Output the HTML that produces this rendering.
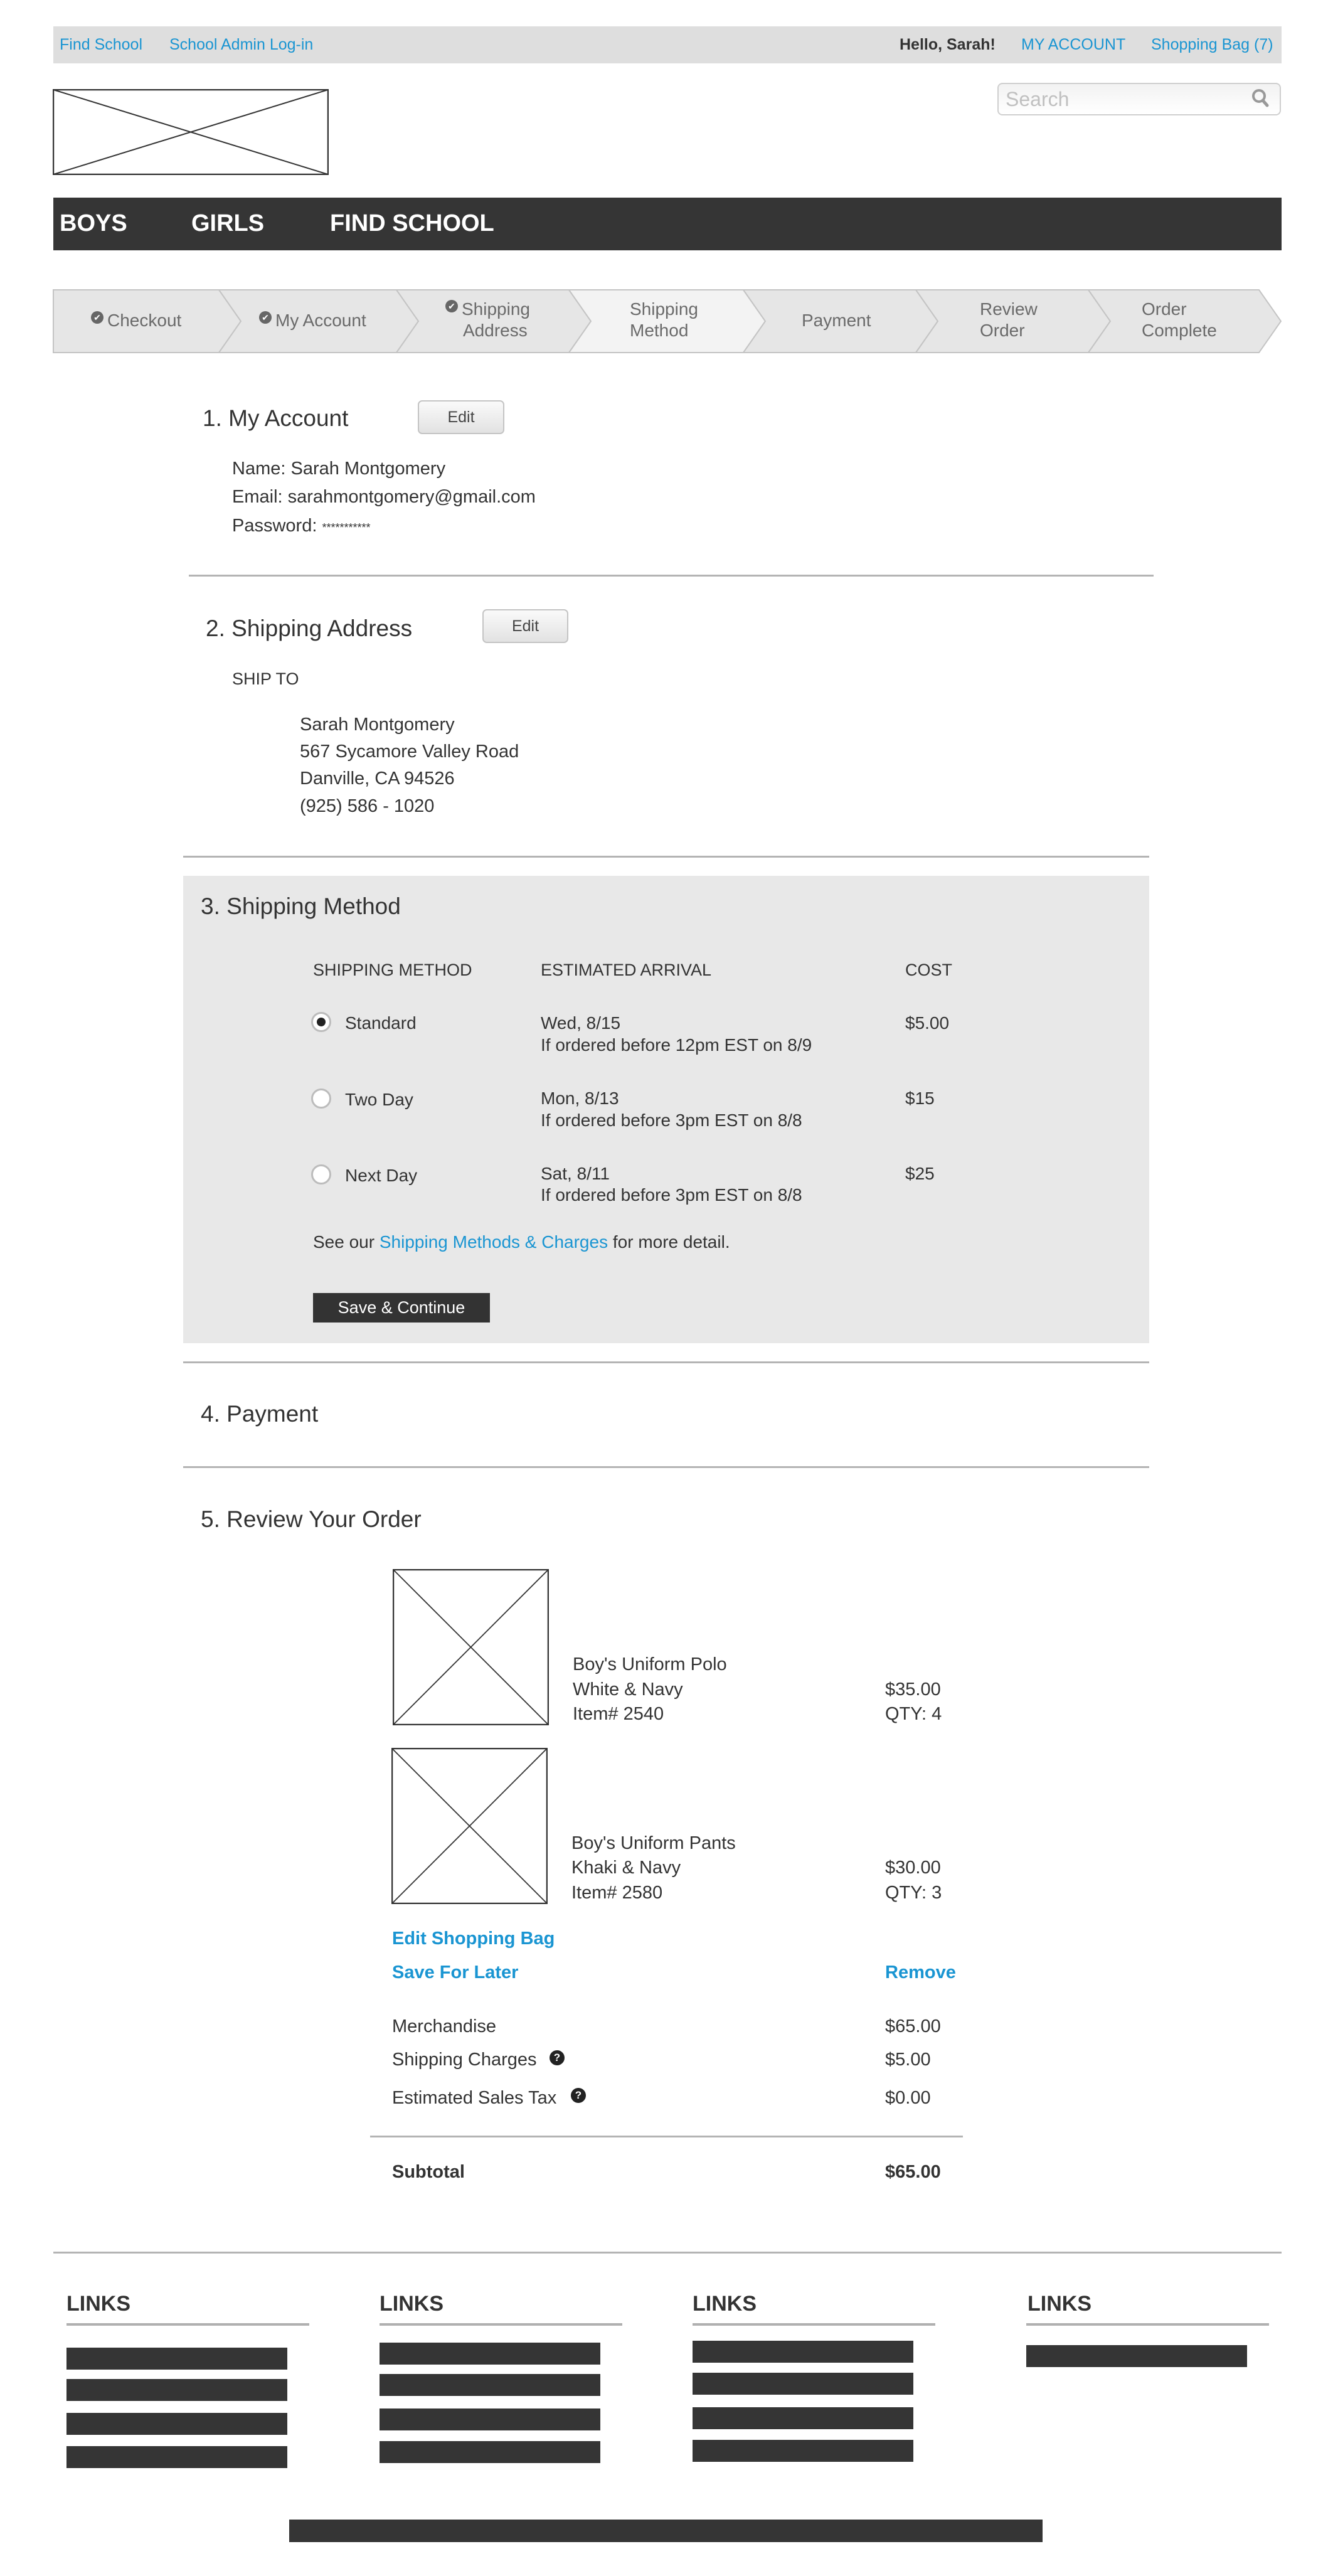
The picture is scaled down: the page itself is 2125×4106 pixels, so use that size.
<!DOCTYPE html>
<html><head><meta charset="utf-8">
<style>
*{margin:0;padding:0;box-sizing:border-box}
body{width:2125px;height:4106px;position:relative;background:#fff;font-family:"Liberation Sans",Arial,sans-serif;color:#333;overflow:hidden}
.a{position:absolute}
.t{position:absolute;white-space:nowrap;line-height:40px;height:40px}
.b{color:#1a95d2}
.h{font-size:37px;color:#333}
.p{font-size:29px}
.hr{position:absolute;height:3px;background:#b4b4b4}
.btn{position:absolute;border:2px solid #c4c4c4;border-radius:7px;background:linear-gradient(#fafafa,#e2e2e2);font-size:25px;text-align:center;color:#444}
.radio{position:absolute;width:32px;height:32px;border-radius:50%;border:3px solid #bcbcbc;background:#fff}
.q{position:absolute;width:24px;height:24px;border-radius:50%;background:#222;color:#fff;font-size:17px;font-weight:bold;text-align:center;line-height:24px}
.bar{position:absolute;background:#353535;width:352px;height:35px}
.lh{position:absolute;font-size:34px;font-weight:bold;color:#333;line-height:40px}
.lu{position:absolute;height:4px;background:#b0b0b0;width:387px}
.st{position:absolute;font-size:28px;color:#6a6a6a;line-height:34px;text-align:left;white-space:nowrap}
.ck{display:inline-block;width:20px;height:20px;border-radius:50%;background:#666;color:#fff;font-size:14px;line-height:20px;text-align:center;vertical-align:top;margin-right:6px;margin-top:2px}
</style></head><body>

<!-- top bar -->
<div class="a" style="left:85px;top:42px;width:1958px;height:59px;background:#dedede"></div>
<div class="t b" style="left:95px;top:51px;font-size:25px">Find School</div>
<div class="t b" style="left:270px;top:51px;font-size:25px">School Admin Log-in</div>
<div class="t" style="left:1434px;top:51px;font-size:25px;font-weight:bold;color:#333">Hello, Sarah!</div>
<div class="t b" style="left:1628px;top:51px;font-size:25px">MY ACCOUNT</div>
<div class="t b" style="left:1835px;top:51px;font-size:25px">Shopping Bag (7)</div>

<!-- logo -->
<svg class="a" style="left:84px;top:142px" width="440" height="137"><rect x="1" y="1" width="438" height="135" fill="#fff" stroke="#333" stroke-width="2.5"/><line x1="1" y1="1" x2="439" y2="136" stroke="#333" stroke-width="2"/><line x1="439" y1="1" x2="1" y2="136" stroke="#333" stroke-width="2"/></svg>

<!-- search -->
<div class="a" style="left:1590px;top:132px;width:452px;height:52px;border:2px solid #cfcfcf;border-radius:8px;background:linear-gradient(#f2f2f2,#fff)"></div>
<div class="t" style="left:1603px;top:138px;font-size:32px;color:#c0c0c0">Search</div>
<svg class="a" style="left:1994px;top:140px" width="32" height="34"><circle cx="13" cy="13" r="9" fill="none" stroke="#999" stroke-width="4"/><line x1="19" y1="20" x2="26" y2="28" stroke="#999" stroke-width="5" stroke-linecap="round"/></svg>

<!-- nav -->
<div class="a" style="left:85px;top:315px;width:1958px;height:84px;background:#353535"></div>
<div class="t" style="left:95px;top:336px;font-size:38px;font-weight:bold;color:#fff">BOYS</div>
<div class="t" style="left:305px;top:336px;font-size:38px;font-weight:bold;color:#fff">GIRLS</div>
<div class="t" style="left:526px;top:336px;font-size:38px;font-weight:bold;color:#fff">FIND SCHOOL</div>

<!-- steps -->
<svg class="a" style="left:0;top:460px" width="2125" height="104">
<g stroke="#c4c4c4" stroke-width="2">
<polygon points="85,2 349,2 384,52 349,102 85,102" fill="#e6e6e6"/>
<polygon points="349,2 632,2 667,52 632,102 349,102 384,52" fill="#e6e6e6"/>
<polygon points="632,2 907,2 942,52 907,102 632,102 667,52" fill="#e6e6e6"/>
<polygon points="907,2 1185,2 1220,52 1185,102 907,102 942,52" fill="#f3f3f3"/>
<polygon points="1185,2 1460,2 1495,52 1460,102 1185,102 1220,52" fill="#e6e6e6"/>
<polygon points="1460,2 1735,2 1770,52 1735,102 1460,102 1495,52" fill="#e6e6e6"/>
<polygon points="1735,2 2007,2 2042,52 2007,102 1735,102 1770,52" fill="#e6e6e6"/>
</g></svg>
<div class="st" style="left:145px;top:494px"><span class="ck">✔</span>Checkout</div>
<div class="st" style="left:413px;top:494px"><span class="ck">✔</span>My Account</div>
<div class="st" style="left:710px;top:476px"><span class="ck">✔</span>Shipping</div>
<div class="st" style="left:738px;top:510px">Address</div>
<div class="st" style="left:1004px;top:476px">Shipping<br>Method</div>
<div class="st" style="left:1278px;top:494px">Payment</div>
<div class="st" style="left:1562px;top:476px">Review<br>Order</div>
<div class="st" style="left:1820px;top:476px">Order<br>Complete</div>

<!-- 1 -->
<div class="t h" style="left:323px;top:647px">1. My Account</div>
<div class="btn" style="left:666px;top:638px;width:138px;height:54px;line-height:50px">Edit</div>
<div class="t p" style="left:370px;top:727px">Name: Sarah Montgomery</div>
<div class="t p" style="left:370px;top:772px">Email: sarahmontgomery@gmail.com</div>
<div class="t p" style="left:370px;top:818px">Password: <span style="font-size:18px">***********</span></div>
<div class="hr" style="left:301px;top:916px;width:1538px"></div>

<!-- 2 -->
<div class="t h" style="left:328px;top:982px">2. Shipping Address</div>
<div class="btn" style="left:769px;top:971px;width:137px;height:54px;line-height:50px">Edit</div>
<div class="t" style="left:370px;top:1062px;font-size:27px">SHIP TO</div>
<div class="t p" style="left:478px;top:1135px">Sarah Montgomery</div>
<div class="t p" style="left:478px;top:1178px">567 Sycamore Valley Road</div>
<div class="t p" style="left:478px;top:1221px">Danville, CA 94526</div>
<div class="t p" style="left:478px;top:1265px">(925) 586 - 1020</div>
<div class="hr" style="left:292px;top:1364px;width:1540px"></div>

<!-- 3 -->
<div class="a" style="left:292px;top:1396px;width:1540px;height:745px;background:#e8e8e8"></div>
<div class="t h" style="left:320px;top:1425px">3. Shipping Method</div>
<div class="t" style="left:499px;top:1526px;font-size:27px">SHIPPING METHOD</div>
<div class="t" style="left:862px;top:1526px;font-size:27px">ESTIMATED ARRIVAL</div>
<div class="t" style="left:1443px;top:1526px;font-size:27px">COST</div>

<div class="radio" style="left:496px;top:1613px"><div class="a" style="left:6px;top:6px;width:14px;height:14px;border-radius:50%;background:#222"></div></div>
<div class="t" style="left:550px;top:1611px;font-size:28px">Standard</div>
<div class="t" style="left:862px;top:1611px;font-size:28px">Wed, 8/15</div>
<div class="t" style="left:862px;top:1646px;font-size:28px">If ordered before 12pm EST on 8/9</div>
<div class="t" style="left:1443px;top:1611px;font-size:28px">$5.00</div>

<div class="radio" style="left:496px;top:1735px"></div>
<div class="t" style="left:550px;top:1733px;font-size:28px">Two Day</div>
<div class="t" style="left:862px;top:1731px;font-size:28px">Mon, 8/13</div>
<div class="t" style="left:862px;top:1766px;font-size:28px">If ordered before 3pm EST on 8/8</div>
<div class="t" style="left:1443px;top:1731px;font-size:28px">$15</div>

<div class="radio" style="left:496px;top:1856px"></div>
<div class="t" style="left:550px;top:1854px;font-size:28px">Next Day</div>
<div class="t" style="left:862px;top:1851px;font-size:28px">Sat, 8/11</div>
<div class="t" style="left:862px;top:1885px;font-size:28px">If ordered before 3pm EST on 8/8</div>
<div class="t" style="left:1443px;top:1851px;font-size:28px">$25</div>

<div class="t" style="left:499px;top:1960px;font-size:28px">See our <span class="b">Shipping Methods &amp; Charges</span> for more detail.</div>
<div class="a" style="left:499px;top:2061px;width:282px;height:47px;background:#333;color:#fff;font-size:27px;line-height:47px;text-align:center">Save &amp; Continue</div>

<div class="hr" style="left:292px;top:2170px;width:1540px"></div>
<div class="t h" style="left:320px;top:2234px">4. Payment</div>
<div class="hr" style="left:292px;top:2337px;width:1540px"></div>
<div class="t h" style="left:320px;top:2402px">5. Review Your Order</div>

<!-- products -->
<svg class="a" style="left:626px;top:2501px" width="249" height="249"><rect x="1" y="1" width="247" height="247" fill="#fff" stroke="#333" stroke-width="2.5"/><line x1="1" y1="1" x2="248" y2="248" stroke="#333" stroke-width="1.8"/><line x1="248" y1="1" x2="1" y2="248" stroke="#333" stroke-width="1.8"/></svg>
<div class="t p" style="left:913px;top:2633px">Boy's Uniform Polo</div>
<div class="t p" style="left:913px;top:2673px">White &amp; Navy</div>
<div class="t p" style="left:913px;top:2712px">Item# 2540</div>
<div class="t p" style="left:1411px;top:2673px">$35.00</div>
<div class="t p" style="left:1411px;top:2712px">QTY: 4</div>

<svg class="a" style="left:624px;top:2786px" width="249" height="249"><rect x="1" y="1" width="247" height="247" fill="#fff" stroke="#333" stroke-width="2.5"/><line x1="1" y1="1" x2="248" y2="248" stroke="#333" stroke-width="1.8"/><line x1="248" y1="1" x2="1" y2="248" stroke="#333" stroke-width="1.8"/></svg>
<div class="t p" style="left:911px;top:2918px">Boy's Uniform Pants</div>
<div class="t p" style="left:911px;top:2957px">Khaki &amp; Navy</div>
<div class="t p" style="left:911px;top:2997px">Item# 2580</div>
<div class="t p" style="left:1411px;top:2957px">$30.00</div>
<div class="t p" style="left:1411px;top:2997px">QTY: 3</div>

<div class="t p b" style="left:625px;top:3070px;font-weight:bold">Edit Shopping Bag</div>
<div class="t p b" style="left:625px;top:3124px;font-weight:bold">Save For Later</div>
<div class="t p b" style="left:1411px;top:3124px;font-weight:bold">Remove</div>

<div class="t p" style="left:625px;top:3210px">Merchandise</div>
<div class="t p" style="left:1411px;top:3210px">$65.00</div>
<div class="t p" style="left:625px;top:3263px">Shipping Charges</div>
<div class="q" style="left:876px;top:3268px">?</div>
<div class="t p" style="left:1411px;top:3263px">$5.00</div>
<div class="t p" style="left:625px;top:3324px">Estimated Sales Tax</div>
<div class="q" style="left:910px;top:3328px">?</div>
<div class="t p" style="left:1411px;top:3324px">$0.00</div>
<div class="hr" style="left:590px;top:3404px;width:945px"></div>
<div class="t p" style="left:625px;top:3442px;font-weight:bold">Subtotal</div>
<div class="t p" style="left:1411px;top:3442px;font-weight:bold">$65.00</div>

<!-- footer -->
<div class="hr" style="left:85px;top:3589px;width:1958px"></div>
<div class="lh" style="left:106px;top:3652px">LINKS</div>
<div class="lh" style="left:605px;top:3652px">LINKS</div>
<div class="lh" style="left:1104px;top:3652px">LINKS</div>
<div class="lh" style="left:1638px;top:3652px">LINKS</div>
<div class="lu" style="left:106px;top:3703px"></div>
<div class="lu" style="left:605px;top:3703px"></div>
<div class="lu" style="left:1104px;top:3703px"></div>
<div class="lu" style="left:1636px;top:3703px"></div>

<div class="bar" style="left:106px;top:3742px"></div>
<div class="bar" style="left:106px;top:3792px"></div>
<div class="bar" style="left:106px;top:3846px"></div>
<div class="bar" style="left:106px;top:3899px"></div>
<div class="bar" style="left:605px;top:3734px"></div>
<div class="bar" style="left:605px;top:3784px"></div>
<div class="bar" style="left:605px;top:3839px"></div>
<div class="bar" style="left:605px;top:3891px"></div>
<div class="bar" style="left:1104px;top:3731px"></div>
<div class="bar" style="left:1104px;top:3782px"></div>
<div class="bar" style="left:1104px;top:3837px"></div>
<div class="bar" style="left:1104px;top:3889px"></div>
<div class="bar" style="left:1636px;top:3738px"></div>
<div class="bar" style="left:461px;top:4016px;width:1201px;height:36px"></div>
</body></html>
